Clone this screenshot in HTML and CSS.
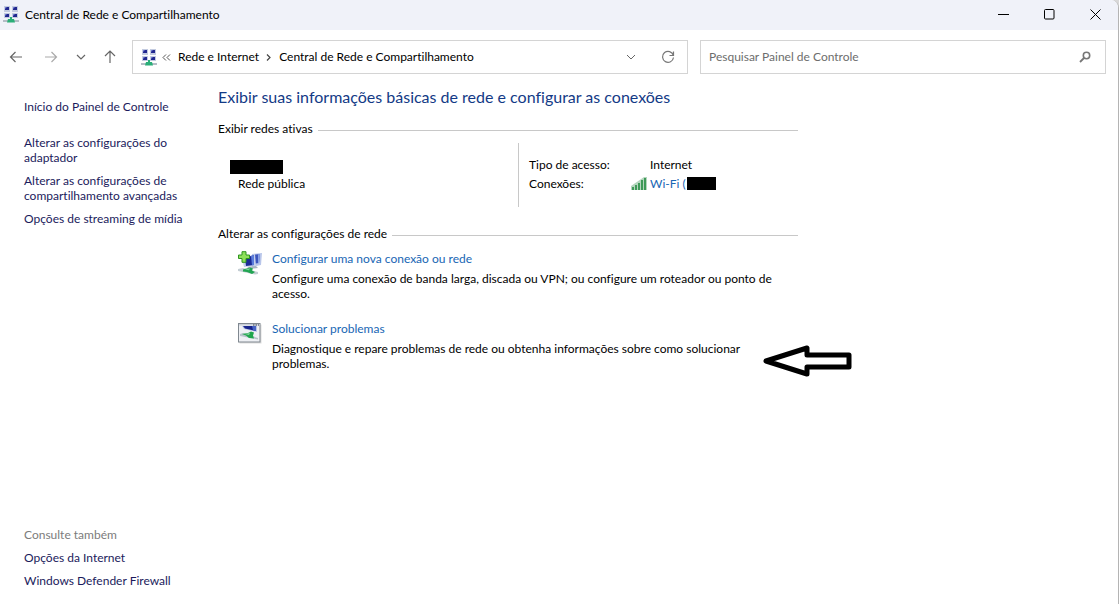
FILE: index.html
```
<!DOCTYPE html>
<html lang="pt-BR">
<head>
    <meta charset="UTF-8">
    <meta name="viewport" content="width=device-width, initial-scale=1.0">
    <title>Central de Rede e Compartilhamento</title>
    <link rel="stylesheet" href="styles.css">
</head>
<body>
    <!-- shared network icon -->
    <svg class="sprite" aria-hidden="true">
        <symbol id="network" viewBox="0 0 16 17">
            <rect x="1" y="0" width="6" height="6" fill="#c3cbe0"/>
            <rect x="9" y="0" width="6" height="6" fill="#c3cbe0"/>
            <rect x="1" y="7" width="6" height="5" fill="#c3cbe0"/>
            <rect x="9" y="7" width="6" height="5" fill="#c3cbe0"/>
            <rect x="2" y="1" width="4" height="3" fill="#22278f"/>
            <rect x="10" y="1" width="4" height="3" fill="#22278f"/>
            <rect x="2" y="8" width="4" height="3" fill="#22278f"/>
            <rect x="10" y="8" width="4" height="3" fill="#22278f"/>
            <path d="M2 1h2L2 3zM10 1h2l-2 2zM2 8h2l-2 2zM10 8h2l-2 2z" fill="#7482d2"/>
            <path d="M0 14h16v2H0z" fill="#b4bdc6"/>
            <path d="M7 11h2v2h2l1 3.500H4L5 13h2z" fill="#2aae78"/>
        </symbol>
    </svg>

    <div class="window">
        <header class="titlebar">
            <svg class="app-icon" width="16" height="17"><use href="#network"/></svg>
            <span class="title">Central de Rede e Compartilhamento</span>
            <button class="win-button" aria-label="Minimizar">
                <svg width="11" height="11" viewBox="0 0 11 11"><path d="M0 5.500h11" stroke="#000"/></svg>
            </button>
            <button class="win-button" aria-label="Maximizar">
                <svg width="11" height="11" viewBox="0 0 11 11"><rect x="0.500" y="0.500" width="9.500" height="9.500" rx="1" fill="none" stroke="#000"/></svg>
            </button>
            <button class="win-button" aria-label="Fechar">
                <svg width="11" height="11" viewBox="0 0 11 11"><path d="M0.500 0.500l10 10M10.500 0.500l-10 10" stroke="#000"/></svg>
            </button>
        </header>

        <nav class="toolbar">
            <div class="history">
                <button class="nav-button" aria-label="Voltar">
                    <svg width="14" height="12" viewBox="0 0 14 12"><path d="M6.500 1L1.500 6l5 5M1.500 6H13" fill="none" stroke="#666" stroke-width="1.200"/></svg>
                </button>
                <button class="nav-button" aria-label="Avançar">
                    <svg width="14" height="12" viewBox="0 0 14 12"><path d="M7.500 1l5 5-5 5M12.500 6H1" fill="none" stroke="#aaa" stroke-width="1.200"/></svg>
                </button>
                <button class="nav-button" aria-label="Locais recentes">
                    <svg width="10" height="6" viewBox="0 0 10 6"><path d="M1 1l4 4 4-4" fill="none" stroke="#666" stroke-width="1.200"/></svg>
                </button>
                <button class="nav-button" aria-label="Acima">
                    <svg width="12" height="14" viewBox="0 0 12 14"><path d="M1 6l5-5 5 5M6 1v12" fill="none" stroke="#666" stroke-width="1.200"/></svg>
                </button>
            </div>

            <div class="address">
                <svg width="16" height="17"><use href="#network"/></svg>
                <svg class="overflow" width="9" height="7" viewBox="0 0 9 7"><path d="M4 0.500l-3 3 3 3M8 0.500l-3 3 3 3" fill="none" stroke="#555"/></svg>
                <button class="crumb">Rede e Internet</button>
                <svg class="separator" width="5" height="7" viewBox="0 0 5 7"><path d="M1 0.500l3 3-3 3" fill="none" stroke="#444" stroke-width="1.200"/></svg>
                <button class="crumb">Central de Rede e Compartilhamento</button>
                <button class="address-button push" aria-label="Locais anteriores">
                    <svg width="10" height="6" viewBox="0 0 10 6"><path d="M1 1l4 4 4-4" fill="none" stroke="#666"/></svg>
                </button>
                <button class="address-button" aria-label="Atualizar">
                    <svg width="14" height="14" viewBox="0 0 14 14"><path d="M12.300 5.200A5.500 5.500 0 1 0 12.500 7.500M12.500 1.500v4H8.500" fill="none" stroke="#777" stroke-width="1.200"/></svg>
                </button>
            </div>

            <div class="search">
                <input type="search" class="search-input" placeholder="Pesquisar Painel de Controle" aria-label="Pesquisar Painel de Controle">
                <svg width="12" height="12" viewBox="0 0 12 12"><circle cx="7.500" cy="4.500" r="3.200" fill="none" stroke="#777" stroke-width="1.600"/><path d="M5 7L1 11" stroke="#777" stroke-width="1.800"/></svg>
            </div>
        </nav>

        <div class="content">
            <aside class="sidebar">
                <a class="side-link home" href="#">Início do Painel de Controle</a>
                <a class="side-link" href="#">Alterar as configurações do adaptador</a>
                <a class="side-link" href="#">Alterar as configurações de compartilhamento avançadas</a>
                <a class="side-link" href="#">Opções de streaming de mídia</a>
                <div class="see-also">
                    <span class="see-also-title">Consulte também</span>
                    <a class="side-link" href="#">Opções da Internet</a>
                    <a class="side-link" href="#">Windows Defender Firewall</a>
                </div>
            </aside>

            <main class="main">
                <h1 class="heading">Exibir suas informações básicas de rede e configurar as conexões</h1>

                <h2 class="section-title">Exibir redes ativas</h2>
                <div class="active-network">
                    <div class="network-name">
                        <span class="redacted name"></span>
                        <span class="network-type">Rede pública</span>
                    </div>
                    <dl class="network-info">
                        <dt>Tipo de acesso:</dt>
                        <dd>Internet</dd>
                        <dt>Conexões:</dt>
                        <dd class="connection">
                            <svg class="signal" width="16" height="13" viewBox="0 0 16 13">
                                <path d="M0 13V9L13 0h3v13z" fill="#b5d6be"/>
                                <g fill="#3f9a58">
                                    <rect x="1" y="10" width="2" height="3"/>
                                    <rect x="4" y="8" width="2" height="5"/>
                                    <rect x="7" y="6" width="2" height="7"/>
                                    <rect x="10" y="3" width="2" height="10"/>
                                    <rect x="13" y="1" width="2" height="12"/>
                                </g>
                            </svg>
                            <a class="link" href="#">Wi-Fi (</a><span class="redacted ssid"></span>
                        </dd>
                    </dl>
                </div>

                <h2 class="section-title">Alterar as configurações de rede</h2>
                <div class="task">
                    <svg class="task-icon" width="24" height="24" viewBox="0 0 24 24">
                        <path d="M14 3l10-1-1 12-9 2z" fill="#b9c6ea"/>
                        <path d="M15 4l7-1-1 9-6 1z" fill="#3c55bd"/>
                        <path d="M20 3.300l2-.3-1 9-1 .2z" fill="#8aa3e6"/>
                        <path d="M4 8l13-5 1 12-12 1z" fill="#c5d0ec"/>
                        <path d="M7 7l9-3v10l-8 1z" fill="#1b2b96"/>
                        <path d="M13 5l3-1v10l-2 .3z" fill="#5b7ddb"/>
                        <path d="M9 16l9-1 2 2-8 1z" fill="#a7b2bf"/>
                        <path d="M0 18l5-1 15 4v2l-3 .5L0 20z" fill="#c4ced4"/>
                        <path d="M5 18.500l7-2 3 1-1 2 3 1.500-3 2-5-2-4-.5z" fill="#22a552"/>
                        <path d="M7 18.500l5-1.200-1 2z" fill="#7fd39b"/>
                        <path d="M4 .700h4V4h3.500v3.500H8v3.800H4V7.500H.500V4H4z" fill="#8ee05a" stroke="#2f9420"/>
                    </svg>
                    <div class="task-text">
                        <a class="link" href="#">Configurar uma nova conexão ou rede</a>
                        <p class="description">Configure uma conexão de banda larga, discada ou VPN; ou configure um roteador ou ponto de acesso.</p>
                    </div>
                </div>
                <div class="task">
                    <svg class="task-icon" width="24" height="24" viewBox="0 0 24 24">
                        <rect x="1.500" y="3.500" width="22" height="19" fill="#ddd"/>
                        <rect x="0.500" y="2.500" width="21.500" height="18.500" fill="#eef0f4" stroke="#808890"/>
                        <path d="M1 3h20.500v1.500H1z" fill="#c9ced8"/>
                        <path d="M15 4h1.500M17.500 4H19M20 4h1" stroke="#39404d"/>
                        <path d="M4 5h15v6l-13-3z" fill="#b9c4e6"/>
                        <path d="M5 5h13v5L7 7.500z" fill="#18258c"/>
                        <path d="M14 5h4v5l-3-.8z" fill="#4764c4"/>
                        <path d="M2 13l3-1 15 5v1.500L2 15z" fill="#b7c3ca"/>
                        <path d="M4 13l6-1 3-1.500 3 1-1 3 1 3-5-.5-3-2.500z" fill="#20a64d"/>
                        <path d="M7 13l5-1-1 2z" fill="#8ed7a5"/>
                    </svg>
                    <div class="task-text">
                        <a class="link" href="#">Solucionar problemas</a>
                        <p class="description">Diagnostique e repare problemas de rede ou obtenha informações sobre como solucionar problemas.</p>
                    </div>
                    <svg class="pointer" width="90" height="34" viewBox="0 0 90 34" aria-hidden="true">
                        <path d="M3 17L44 4v7h42v12H44v7z" fill="#fff" stroke="#000" stroke-width="5" stroke-linejoin="round"/>
                    </svg>
                </div>
            </main>
        </div>
    </div>
</body>
</html>
```
FILE: styles.css
```
* {
    box-sizing: border-box;
}

body {
    margin: 0;
    background: #d8d8d8;
    color: #000;
    font-family: Lato, 'Open Sans', sans-serif;
    font-size: 12px;
    font-variant-ligatures: none;
    line-height: 15px;
}

button {
    padding: 0;
    border: none;
    background: none;
    color: inherit;
    font: inherit;
    font-variant-ligatures: none;
}

svg {
    display: block;
    flex: none;
}

a {
    text-decoration: none;
}

.sprite {
    position: absolute;
    width: 0;
    height: 0;
}

.window {
    display: flex;
    flex-direction: column;
    min-height: 100vh;
    border-right: 1px solid #b4b4b4;
    border-top-right-radius: 8px;
    background: #fff;
    overflow: hidden;
}

/* title bar */
.titlebar {
    display: flex;
    align-items: center;
    height: 30px;
    padding: 0 0 2px 3px;
    background: #f0f2f9;
}

.title {
    flex: 1;
    margin-left: 6px;
}

.win-button {
    display: flex;
    align-items: center;
    justify-content: center;
    width: 46px;
    height: 28px;
}

/* navigation */
.toolbar {
    display: grid;
    grid-template-columns: 132px 556fr 418fr;
    height: 44px;
    padding: 10px 12px 0 0;
}

.history {
    display: flex;
    padding-left: 2px;
}

.nav-button {
    display: flex;
    align-items: center;
    justify-content: center;
    width: 28px;
}

.nav-button:nth-child(2) {
    width: 42px;
}

.nav-button:nth-child(3) {
    width: 18px;
}

.nav-button:nth-child(4) {
    width: 40px;
}

.address,
.search {
    display: flex;
    align-items: center;
    border: 1px solid #d4d4d4;
}

.address {
    padding: 0 5px 0 8px;
}

.overflow {
    margin: 0 7px 0 5px;
}

.crumb {
    padding-bottom: 2px;
}

.separator {
    margin: 0 8px 0 7px;
}

.address-button {
    display: flex;
    align-items: center;
    justify-content: center;
    width: 28px;
    height: 28px;
}

.push {
    margin: 0 9px 0 auto;
}

.search {
    margin-left: 12px;
    padding: 0 14px 0 8px;
}

.search-input {
    flex: 1;
    min-width: 0;
    padding: 0 0 2px;
    border: none;
    outline: none;
    background: none;
    font: inherit;
}

.search-input::placeholder {
    color: #6d6d6d;
}

/* content */
.content {
    display: flex;
    flex: 1;
}

.sidebar {
    display: flex;
    flex-direction: column;
    gap: 8px;
    width: 218px;
    padding: 25px 24px 16px;
}

.side-link {
    color: #1b1b5c;
}

.home {
    margin-bottom: 13px;
}

.see-also {
    display: flex;
    flex-direction: column;
    gap: 8px;
    margin-top: auto;
}

.see-also-title {
    color: #7c7c7c;
}

.main {
    width: 580px;
    padding-top: 12px;
}

.heading {
    margin: 0 0 13px;
    color: #133a86;
    font-size: 16px;
    font-weight: normal;
    line-height: 22px;
    white-space: nowrap;
}

.section-title {
    display: flex;
    align-items: center;
    gap: 5px;
    margin: 0;
    font-size: 12px;
    font-weight: normal;
}

.section-title::after {
    content: "";
    flex: 1;
    height: 1px;
    margin-top: 3px;
    background: #c8c8c8;
}

.active-network {
    display: grid;
    grid-template-columns: 300px 1fr;
    margin: 7px 0 19px;
}

.network-name {
    display: flex;
    flex-direction: column;
    align-items: flex-start;
    gap: 2px;
    padding: 17px 0 0 12px;
}

.redacted {
    background: #000;
}

.name {
    width: 53px;
    height: 14px;
}

.network-type {
    margin-left: 8px;
}

.network-info {
    display: grid;
    grid-template-columns: 121px 1fr;
    align-content: start;
    row-gap: 4px;
    height: 64px;
    margin: 0;
    padding: 14px 0 0 10px;
    border-left: 1px solid #c8c8c8;
}

.network-info dd {
    margin: 0;
}

.connection {
    display: flex;
    align-items: center;
}

.signal {
    margin: 0 3px 0 -19px;
}

.ssid {
    width: 29px;
    height: 13px;
    margin-left: 1px;
}

.link {
    color: #1866b4;
}

.task {
    display: flex;
    position: relative;
    gap: 10px;
    margin-top: 10px;
    padding-left: 20px;
}

.task + .task {
    margin-top: 20px;
}

.description {
    margin: 5px 0 0;
}

/* arrow drawn over the page, beside the troubleshooting entry */
.pointer {
    position: absolute;
    top: 23px;
    left: 545px;
}
```
